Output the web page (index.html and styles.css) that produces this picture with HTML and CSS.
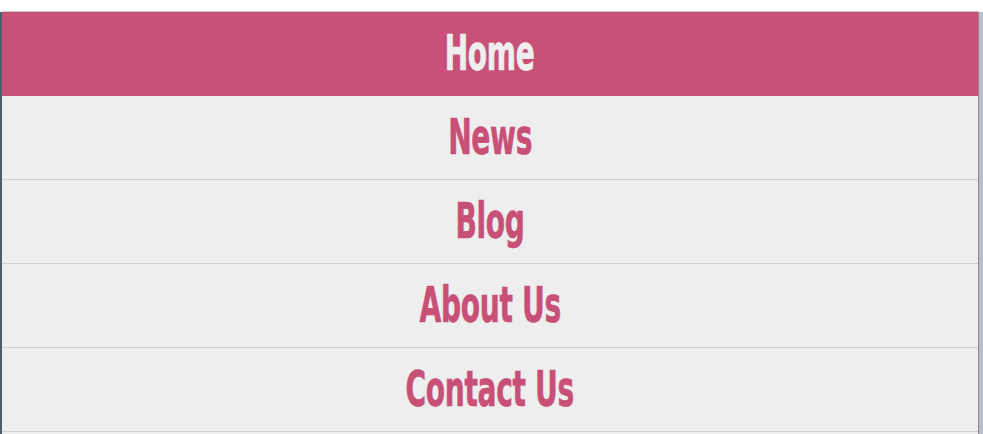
FILE: index.html
```html
<!DOCTYPE html>
<html>
<head>
<meta charset="utf-8">
<link rel="stylesheet" href="styles.css">
</head>
<body>
<div class="page">
  <div class="topbar"></div>
  <div class="row">
    <div class="edge-left"></div>
    <nav class="menu">
      <a class="item active" href="#"><span>Home</span></a>
      <a class="item" href="#"><span>News</span></a>
      <a class="item" href="#"><span>Blog</span></a>
      <a class="item" href="#"><span>About Us</span></a>
      <a class="item" href="#"><span>Contact Us</span></a>
    </nav>
    <div class="edge-right"></div>
  </div>
</div>
</body>
</html>
```

FILE: styles.css
```css
html, body {
  margin: 0;
  padding: 0;
  height: 100%;
  overflow: hidden;
  background: #ffffff;
}
.page {
  display: flex;
  flex-direction: column;
  width: 983px;
  height: 434px;
}
.topbar {
  height: 11px;
  background: #ffffff;
  border-bottom: 1px solid #c8c8c8;
  margin-left: 2px;
  margin-right: 4px;
}
.row {
  display: flex;
  flex: 1;
  min-height: 0;
}
.edge-left {
  width: 2px;
  background: #4b5e6b;
}
.edge-right {
  width: 4px;
  background: #b9bdcc;
  border-left: 1px solid #8a8a8a;
}
.menu {
  flex: 1;
  display: flex;
  flex-direction: column;
  background: #eeeeee;
}
.item {
  display: flex;
  align-items: center;
  justify-content: center;
  height: 83px;
  border-bottom: 1px solid #cfcfcf;
  text-decoration: none;
  color: #c85076;
  font-family: "DejaVu Sans Condensed", "DejaVu Sans", sans-serif;
  font-weight: bold;
  font-size: 47px;
}
.item span {
  display: inline-block;
  transform: translateY(-1px) scale(0.665, 1.06);
  letter-spacing: -0.5px;
  -webkit-text-stroke: 0.6px currentColor;
}
.item.active {
  background: #c85076;
  color: #eeeeee;
  border-bottom-color: #c85076;
}
```
